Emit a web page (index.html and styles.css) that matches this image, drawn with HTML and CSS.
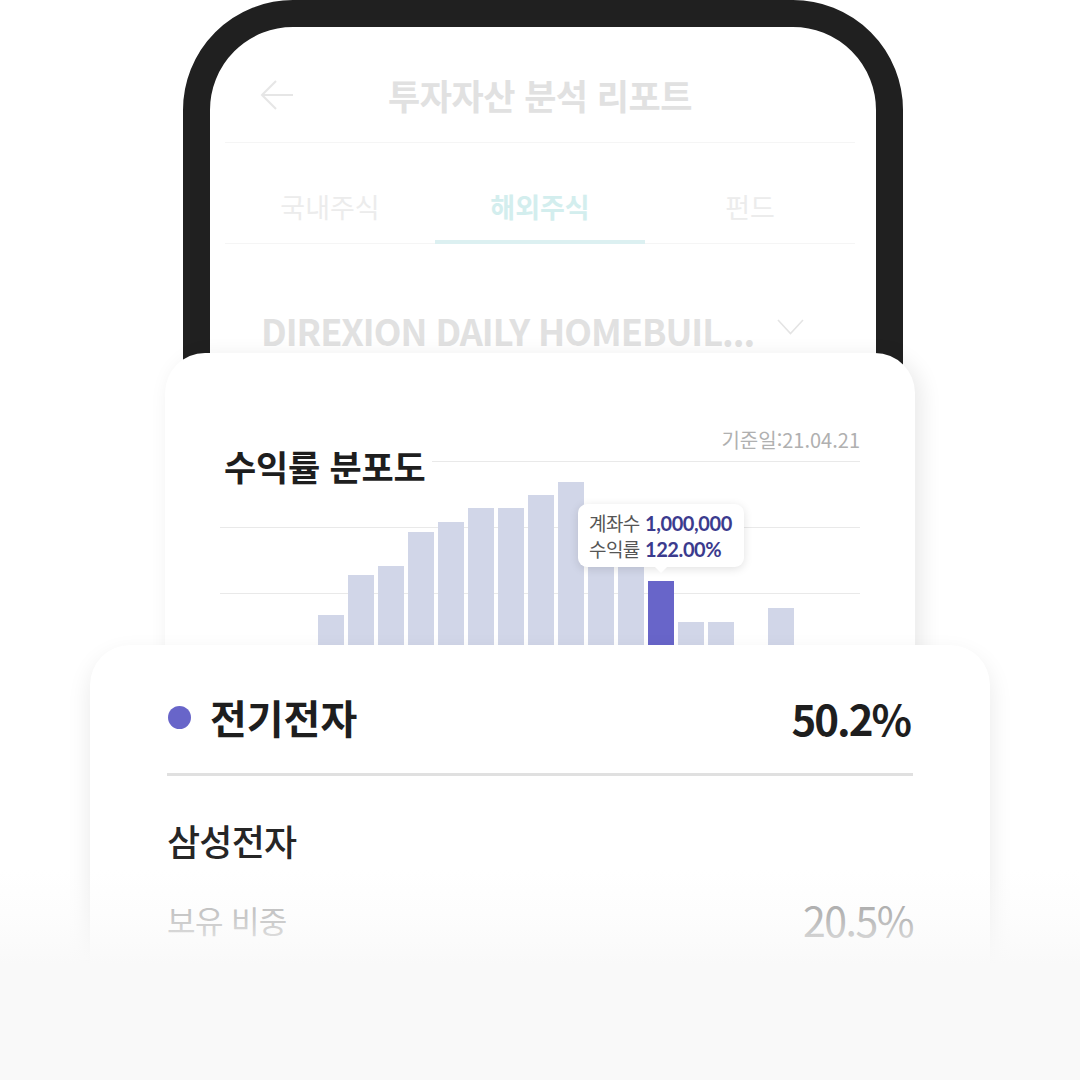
FILE: index.html
```html
<!DOCTYPE html>
<html lang="ko">
<head>
<meta charset="utf-8">
<title>투자자산 분석 리포트</title>
<link rel="stylesheet" href="styles.css">
</head>
<body>
<div class="stage">
  <div class="phone">
    <div class="screen">
      <header class="app-head">
        <svg class="back" width="34" height="32" viewBox="0 0 34 32" aria-hidden="true">
          <path d="M33 16 H2 M16 2 L2 16 L16 30" fill="none" stroke="#e6e6e6" stroke-width="2"/>
        </svg>
        <h1 class="app-title">투자자산 분석 리포트</h1>
        <span></span>
      </header>
      <nav class="tabs">
        <div class="tab">국내주식</div>
        <div class="tab active">해외주식</div>
        <div class="tab">펀드</div>
      </nav>
      <div class="fund-select">
        <span class="fund-name">DIREXION DAILY HOMEBUIL...</span>
        <svg class="chev" width="27" height="16" viewBox="0 0 27 16" aria-hidden="true">
          <polyline points="1,1 13.5,14.5 26,1" fill="none" stroke="#e4e4e4" stroke-width="1.6"/>
        </svg>
      </div>
    </div>
  </div>

  <section class="card chart-card">
    <div class="date">기준일:21.04.21</div>
    <div class="chart">
      <h2 class="chart-title">수익률 분포도</h2>
      <div class="gridline"></div>
      <div class="gridline"></div>
      <div class="gridline"></div>
      <div class="gridline"></div>
      <div class="bars">
        <div class="bar" style="height:75px"></div>
        <div class="bar" style="height:115px"></div>
        <div class="bar" style="height:124px"></div>
        <div class="bar" style="height:158px"></div>
        <div class="bar" style="height:168px"></div>
        <div class="bar" style="height:182px"></div>
        <div class="bar" style="height:182px"></div>
        <div class="bar" style="height:195px"></div>
        <div class="bar" style="height:208px"></div>
        <div class="bar" style="height:160px"></div>
        <div class="bar" style="height:142px"></div>
        <div class="bar hot" style="height:109px"></div>
        <div class="bar" style="height:68px"></div>
        <div class="bar" style="height:68px"></div>
        <div class="bar" style="height:0px"></div>
        <div class="bar" style="height:82px"></div>
      </div>
      <div class="tooltip">
        <div class="tip-row"><span class="tip-label">계좌수</span> <span class="tip-val">1,000,000</span></div>
        <div class="tip-row"><span class="tip-label">수익률</span> <span class="tip-val">122.00%</span></div>
      </div>
    </div>
  </section>

  <section class="card sector-card">
    <div class="sector-row">
      <div class="sector-name"><span class="dot"></span>전기전자</div>
      <div class="sector-pct">50.2%</div>
    </div>
    <div class="divider"></div>
    <div class="stock-name">삼성전자</div>
    <div class="stock-row">
      <span class="stock-label">보유 비중</span>
      <span class="stock-pct">20.5%</span>
    </div>
  </section>

  <div class="fade"></div>
</div>
</body>
</html>
```

FILE: styles.css
```css
* { box-sizing: border-box; }
html, body { margin: 0; padding: 0; }
body {
  width: 1080px;
  height: 1080px;
  overflow: hidden;
  background: #ffffff;
  font-family: "Noto Sans CJK KR", "Noto Sans", sans-serif;
  color: #222;
}
.stage {
  position: relative;
  width: 1080px;
  height: 1080px;
  overflow: hidden;
  background: #ffffff;
}

/* phone */
.phone {
  width: 720px;
  height: 480px;
  margin-left: 183px;
  border: 27px solid #202020;
  border-radius: 110px;
  background: #fff;
}
.screen {
  padding: 0 21px 0 15px;
}
.app-head {
  height: 116px;
  padding-top: 20px;
  display: grid;
  grid-template-columns: 1fr auto 1fr;
  align-items: center;
  border-bottom: 1px solid #f5f5f5;
}
.back { margin-left: 35px; display: block; }
.app-title {
  margin: 0;
  font-size: 35px;
  font-weight: 700;
  color: #e1e1e1;
  letter-spacing: -0.5px;
  line-height: 44px;
}
.tabs {
  display: flex;
  border-bottom: 1px solid #f5f5f5;
}
.tab {
  flex: 1;
  text-align: center;
  font-size: 27px;
  line-height: 32px;
  letter-spacing: 0;
  color: #ececec;
  padding-top: 48px;
  padding-bottom: 17px;
  border-bottom: 4px solid transparent;
  margin-bottom: -1px;
}
.tab.active {
  color: #d3eeee;
  font-weight: 700;
  border-bottom-color: #dcf0f1;
}
.fund-select {
  display: flex;
  align-items: center;
  padding-top: 64px;
  padding-left: 36px;
  gap: 23px;
}
.fund-name {
  font-size: 36px;
  line-height: 44px;
  font-weight: 700;
  color: #e1e1e1;
  letter-spacing: -1px;
}
.chev { display: block; margin-top: -6px; }

/* cards */
.card {
  background: #fff;
  border-radius: 40px;
  position: relative;
}
.chart-card {
  width: 750px;
  height: 400px;
  margin-left: 165px;
  margin-top: -127px;
  padding: 75px 55px 0;
  box-shadow: 6px 4px 22px rgba(0,0,0,0.09);
}
.date {
  text-align: right;
  font-size: 20px;
  line-height: 24px;
  color: #b0b0b0;
  letter-spacing: 0;
}
.chart {
  position: relative;
  margin-top: 9px;
  height: 240px;
}
.chart-title {
  position: absolute;
  left: 0;
  top: -17px;
  margin: 0;
  padding: 0 6px 0 4px;
  background: #fff;
  z-index: 2;
  font-size: 35px;
  line-height: 44px;
  font-weight: 700;
  letter-spacing: -0.2px;
  color: #1e1e1e;
}
.gridline {
  height: 66px;
  border-top: 1px solid #e9e9e9;
}
.bars {
  position: absolute;
  left: 98px;
  bottom: 11px;
  display: flex;
  align-items: flex-end;
  gap: 4px;
}
.bar {
  width: 26px;
  background: #d1d6e8;
}
.bar.hot { background: #6865c9; }
.tooltip {
  position: absolute;
  left: 358px;
  top: 43px;
  width: 166px;
  height: 63px;
  padding: 6px 0 0 11px;
  background: #fff;
  border-radius: 9px;
  box-shadow: 0 2px 10px rgba(0,0,0,0.12);
  z-index: 3;
}
.tooltip::after {
  content: "";
  position: absolute;
  left: 77px;
  bottom: -6px;
  width: 0;
  height: 0;
  border-left: 6px solid transparent;
  border-right: 6px solid transparent;
  border-top: 6px solid #fff;
}
.tip-row {
  font-size: 19px;
  line-height: 25px;
  white-space: nowrap;
}
.tip-label { color: #555; letter-spacing: -0.6px; }
.tip-val {
  font-family: Lato, "Noto Sans", sans-serif;
  font-size: 20px;
  font-weight: 700;
  color: #3b3b8e;
  letter-spacing: -0.4px;
}

.sector-card {
  width: 900px;
  height: 420px;
  margin-left: 90px;
  margin-top: -108px;
  padding: 44px 77px 0;
  box-shadow: 0 10px 24px rgba(0,0,0,0.09);
  z-index: 4;
}
.sector-row {
  display: flex;
  justify-content: space-between;
  align-items: center;
  height: 56px;
}
.sector-name {
  display: flex;
  align-items: center;
  font-size: 40px;
  font-weight: 700;
  letter-spacing: 0;
  color: #1e1e1e;
}
.dot {
  width: 23px;
  height: 23px;
  border-radius: 50%;
  background: #6865c9;
  margin: 0 19px 0 1px;
}
.sector-pct {
  font-size: 42px;
  font-weight: 700;
  letter-spacing: -2px;
  color: #1e1e1e;
  margin-right: 3px;
}
.divider {
  margin-top: 28px;
  height: 3px;
  background: #e0e0e0;
}
.stock-name {
  margin-top: 42px;
  font-size: 36px;
  line-height: 44px;
  font-weight: 500;
  letter-spacing: -0.8px;
  color: #262626;
}
.stock-row {
  margin-top: 33px;
  display: flex;
  justify-content: space-between;
  align-items: center;
  height: 48px;
}
.stock-label {
  font-size: 31px;
  letter-spacing: -0.6px;
  color: #ababab;
}
.stock-pct {
  font-size: 41px;
  letter-spacing: -1.5px;
  color: #919191;
}

.fade {
  position: absolute;
  left: 0;
  right: 0;
  top: 870px;
  bottom: 0;
  z-index: 10;
  background: linear-gradient(to bottom, rgba(249,249,249,0) 0px, rgba(249,249,249,0.4) 50px, #f9f9f9 95px, #f9f9f9 100%);
}
```
